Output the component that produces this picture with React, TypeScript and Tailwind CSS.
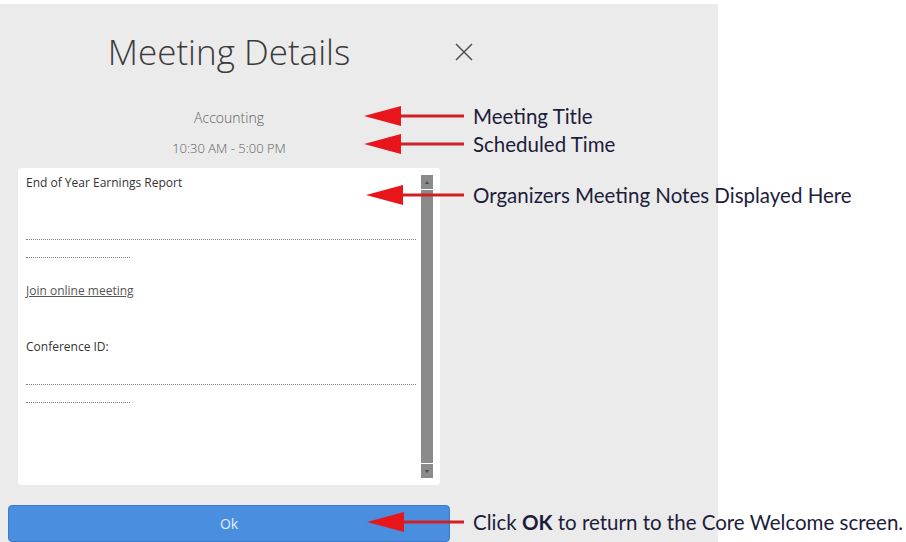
import React from 'react';

const ui = { fontFamily: '"Open Sans", "Noto Sans", sans-serif' };
const note = { fontFamily: 'Lato, "Open Sans", sans-serif' };

function Arrow({ width }: { width: number }) {
  return (
    <svg width={width} height="22" viewBox={`0 0 ${width} 22`} className="shrink-0">
      <line x1="30" y1="11" x2={width} y2="11" stroke="#cf2027" strokeWidth="3" />
      <polygon points="0,11 37,1 37,21" fill="#e8151b" />
    </svg>
  );
}

function Callout({ top, left, width, children }: { top: number; left: number; width: number; children: React.ReactNode }) {
  return (
    <div className="absolute flex items-center gap-[9px]" style={{ top, left }}>
      <Arrow width={width} />
      <span className="text-[20.5px] leading-[22px] text-[#1d1d3b] whitespace-nowrap" style={note}>
        {children}
      </span>
    </div>
  );
}

function ScrollButton({ up }: { up?: boolean }) {
  return (
    <div className="h-[14px] w-[12px] bg-[#8b8b8b] flex items-center justify-center">
      <svg width="4" height="3" viewBox="0 0 4 3">
        <polygon points={up ? '2,0 4,3 0,3' : '0,0 4,0 2,3'} fill="#4a4a4a" />
      </svg>
    </div>
  );
}

function Dotted({ w }: { w: number }) {
  return <div className="border-t border-dotted border-[#7d7d7d]" style={{ width: w }} />;
}

export default function App() {
  return (
    <div className="relative w-[906px] h-[542px] bg-white overflow-hidden">
      <div className="mt-[4px] w-[718px] h-[538px] bg-[#ebebeb] pt-[26px]" style={ui}>
        <div className="flex items-center">
          <h1 className="w-[458px] text-center text-[35px] leading-[44px] font-light text-[#3b3b3b]">Meeting Details</h1>
          <svg width="18" height="18" viewBox="0 0 18 18" className="-ml-[3px]">
            <path d="M1 1 L17 17 M17 1 L1 17" stroke="#4a4a4a" strokeWidth="1.4" />
          </svg>
        </div>

        <div className="w-[458px] text-center text-[#606060] font-light">
          <p className="mt-[35px] text-[14px] leading-[18px]">Accounting</p>
          <p className="mt-[12px] text-[13px] leading-[18px]">10:30 AM - 5:00 PM</p>
        </div>

        {/* notes box */}
        <div className="ml-[18px] mt-[11px] w-[422px] h-[317px] bg-white rounded-[3px] flex">
          <div className="flex-1 pl-[8px] pt-[7px] text-[12px] leading-[16px] text-[#333]">
            <p>End of Year Earnings Report</p>
            <div className="mt-[48px]"><Dotted w={390} /></div>
            <div className="mt-[17px]"><Dotted w={104} /></div>
            <p className="mt-[25px] underline text-[#555]">Join online meeting</p>
            <p className="mt-[40px]">Conference ID:</p>
            <div className="mt-[29px]"><Dotted w={390} /></div>
            <div className="mt-[17px]"><Dotted w={104} /></div>
          </div>
          <div className="my-[7px] mr-[7px] w-[12px] flex flex-col gap-[1px]">
            <ScrollButton up />
            <div className="flex-1 bg-[#8b8b8b]" />
            <ScrollButton />
          </div>
        </div>

        <button className="ml-[8px] mt-[20px] w-[442px] h-[37px] rounded-[4px] bg-[#4a8ee0] border border-[#3b7bcc] text-[14px] text-[#e3effc]">
          Ok
        </button>
      </div>

      <Callout top={105} left={364} width={100}>Meeting Title</Callout>
      <Callout top={133} left={364} width={100}>Scheduled Time</Callout>
      <Callout top={184} left={366} width={98}>Organizers Meeting Notes Displayed Here</Callout>
      <Callout top={511} left={367} width={97}>
        Click <b className="font-bold">OK</b> to return to the Core Welcome screen.
      </Callout>
    </div>
  );
}
